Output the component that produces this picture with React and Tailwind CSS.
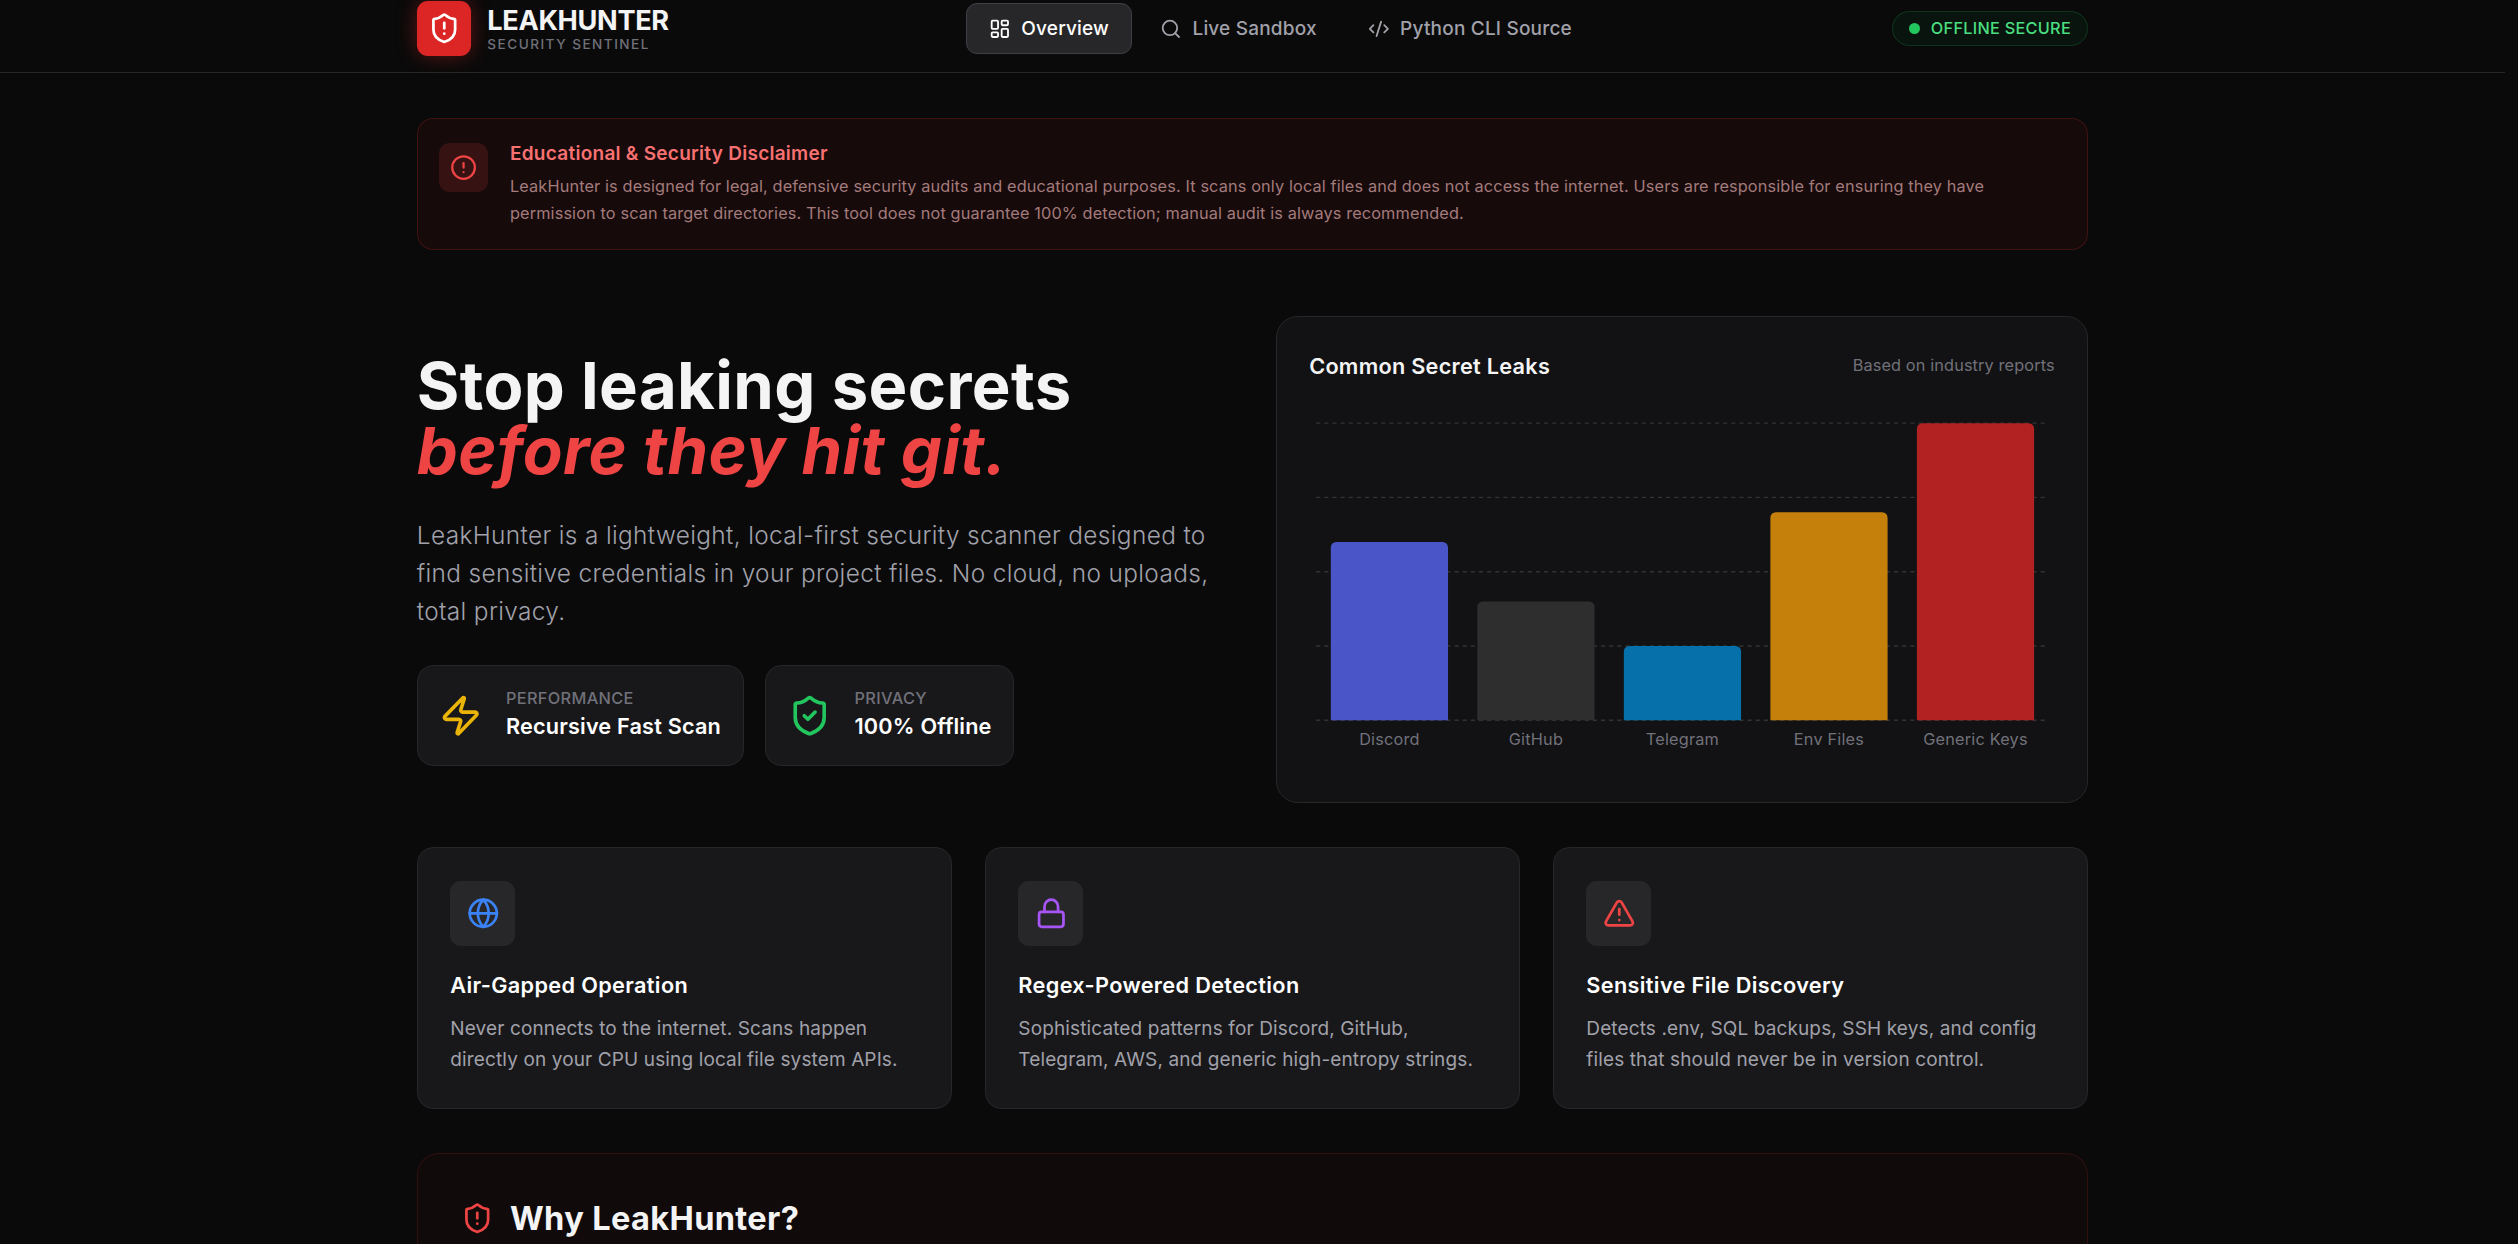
import React from 'react';
import { ShieldAlert, LayoutDashboard, Search, CodeXml, AlertCircle, Zap, ShieldCheck, Globe, Lock, AlertTriangle } from 'lucide-react';

const bars = [
  { name: 'Discord', value: 60, fill: '#4a55c8' },
  { name: 'GitHub', value: 40, fill: '#2e2e2e' },
  { name: 'Telegram', value: 25, fill: '#0570aa' },
  { name: 'Env Files', value: 70, fill: '#c5800c' },
  { name: 'Generic Keys', value: 100, fill: '#b22222' },
];

function Chart() {
  const w = 549;
  const left = 5;
  const right = 545;
  const top = 6;
  const bottom = 225;
  const band = (right - left) / 5;
  const bw = band * 0.8;
  return (
    <svg width={w} height={261} viewBox={`0 0 ${w} 261`} className="block w-full">
      {[0, 1, 2, 3, 4].map((i) => {
        const y = top + ((bottom - top) / 4) * i;
        return <line key={i} x1={left} x2={right} y1={y} y2={y} stroke="#333333" strokeDasharray="3 3" strokeWidth="1" />;
      })}
      {bars.map((b, i) => {
        const x = left + band * i + band * 0.1;
        const h = ((bottom - top) * b.value) / 100;
        const y = bottom - h;
        const r = 4;
        return (
          <g key={b.name}>
            <path
              d={`M${x},${bottom} L${x},${y + r} A${r},${r} 0 0 1 ${x + r},${y} L${x + bw - r},${y} A${r},${r} 0 0 1 ${x + bw},${y + r} L${x + bw},${bottom} Z`}
              fill={b.fill}
            />
            <text x={x + bw / 2} y={243} textAnchor="middle" fontSize="12" fill="#71717a">{b.name}</text>
          </g>
        );
      })}
    </svg>
  );
}

function NavItem({ icon: Icon, label, active }) {
  return (
    <div className={`flex items-center gap-2 rounded-lg px-4 py-2 text-sm font-medium border ${active ? 'bg-[#27272a] border-[#3f3f46] text-white' : 'border-transparent text-[#a1a1aa]'}`}>
      <Icon size={16} />
      <span>{label}</span>
    </div>
  );
}

function Stat({ icon: Icon, color, label, value }) {
  return (
    <div className="flex items-center gap-[17px] rounded-xl border border-[#27272a] bg-[#18181b] px-4 py-[16.5px]">
      <Icon size={32} className={color} />
      <div>
        <div className="text-xs font-medium uppercase leading-4 tracking-[0.26px] text-[#71717a]">{label}</div>
        <div className="font-semibold tracking-[0.12px] text-white">{value}</div>
      </div>
    </div>
  );
}

function Feature({ icon: Icon, color, title, desc }) {
  return (
    <div className="rounded-xl border border-[#27272a] bg-[#18181b] p-6">
      <div className="mb-[17px] w-fit rounded-lg bg-[#27272a] p-3">
        <Icon size={24} className={color} />
      </div>
      <h3 className="mb-[9px] font-semibold tracking-[0.26px] text-white">{title}</h3>
      <p className="text-sm leading-relaxed tracking-[0.1px] text-[#a1a1aa]">{desc}</p>
    </div>
  );
}

export default function App() {
  return (
    <div className="h-[1244px] overflow-hidden bg-[#0a0a0a] pr-[13px] font-['Inter',sans-serif] tracking-[0.15px] text-white">
      <div className="[zoom:1.3567]">
        <header className="border-b border-[#27272a] pb-3 pt-px">
          <div className="mx-auto flex max-w-7xl items-center justify-between px-6">
            <div className="flex items-center gap-3">
              <div className="flex h-10 w-10 items-center justify-center rounded-lg bg-[#dc2626] shadow-[0_0_15px_rgba(220,38,38,0.4)]">
                <ShieldAlert size={24} className="text-white" />
              </div>
              <div className="mt-1">
                <div className="text-xl font-bold leading-5 tracking-[-0.24px] text-[#f4f4f5]">LEAKHUNTER</div>
                <div className="text-[10px] font-medium uppercase leading-4 tracking-[1.1px] text-[#71717a]">Security Sentinel</div>
              </div>
            </div>
            <nav className="flex items-center gap-1">
              <NavItem icon={LayoutDashboard} label="Overview" active />
              <NavItem icon={Search} label="Live Sandbox" />
              <NavItem icon={CodeXml} label="Python CLI Source" />
            </nav>
            <div className="flex items-center gap-2 rounded-full border border-[#14532d]/50 bg-[#052e16]/30 px-3 py-1">
              <span className="h-2 w-2 rounded-full bg-[#22c55e]" />
              <span className="text-xs font-medium tracking-[0.2px] text-[#4ade80]">OFFLINE SECURE</span>
            </div>
          </div>
        </header>

        <main className="mx-auto max-w-7xl px-6 pb-8 pt-[33px]">
          <section className="mb-[49px] flex items-start gap-4 rounded-xl border border-[#7f1d1d]/40 bg-[#170a0b] p-4">
            <div className="mt-0.5 shrink-0 rounded-lg bg-[#ef4444]/15 p-2">
              <AlertCircle size={20} className="text-[#ef4444]" />
            </div>
            <div>
              <h2 className="mb-1 text-sm font-semibold tracking-[0.2px] text-[#f87171]">Educational &amp; Security Disclaimer</h2>
              <p className="text-xs leading-5 tracking-[0.1px] text-[#a47b7b]">
                LeakHunter is designed for legal, defensive security audits and educational purposes. It scans only local files and does not access the internet. Users are responsible for ensuring they have permission to scan target directories. This tool does not guarantee 100% detection; manual audit is always recommended.
              </p>
            </div>
          </section>

          <section className="mb-[33px] grid grid-cols-[1fr_599px] items-center gap-[34px]">
            <div>
              <h1 className="mb-[25px] text-5xl font-bold tracking-[0.3px] text-[#f4f4f5]">
                Stop leaking secrets
                <br />
                <span className="italic text-[#ef4444]">before they hit git.</span>
              </h1>
              <p className="mb-[25px] text-lg font-light leading-7 tracking-[0.26px] text-[#a1a1aa]">
                LeakHunter is a lightweight, local-first security scanner designed to find sensitive credentials in your project files. No cloud, no uploads, total privacy.
              </p>
              <div className="flex gap-4">
                <Stat icon={Zap} color="text-[#eab308]" label="Performance" value="Recursive Fast Scan" />
                <Stat icon={ShieldCheck} color="text-[#22c55e]" label="Privacy" value="100% Offline" />
              </div>
            </div>
            <div className="rounded-2xl border border-[#27272a] bg-[#121214] p-6">
              <div className="mb-6 flex items-center justify-between">
                <h3 className="font-semibold tracking-[0.2px] text-[#f4f4f5]">Common Secret Leaks</h3>
                <span className="text-xs tracking-[0.1px] text-[#71717a]">Based on industry reports</span>
              </div>
              <Chart />
            </div>
          </section>

          <section className="mb-8 grid grid-cols-3 gap-6">
            <Feature icon={Globe} color="text-[#3b82f6]" title="Air-Gapped Operation" desc="Never connects to the internet. Scans happen directly on your CPU using local file system APIs." />
            <Feature icon={Lock} color="text-[#a855f7]" title="Regex-Powered Detection" desc="Sophisticated patterns for Discord, GitHub, Telegram, AWS, and generic high-entropy strings." />
            <Feature icon={AlertTriangle} color="text-[#ef4444]" title="Sensitive File Discovery" desc="Detects .env, SQL backups, SSH keys, and config files that should never be in version control." />
          </section>

          <section className="rounded-2xl border border-[#7f1d1d]/30 bg-[#100a0a] p-8">
            <div className="flex items-center gap-3">
              <ShieldAlert size={24} className="text-[#ef4444]" />
              <h2 className="text-2xl font-bold tracking-[0.26px] text-[#f4f4f5]">Why LeakHunter?</h2>
            </div>
          </section>
        </main>
      </div>
    </div>
  );
}
